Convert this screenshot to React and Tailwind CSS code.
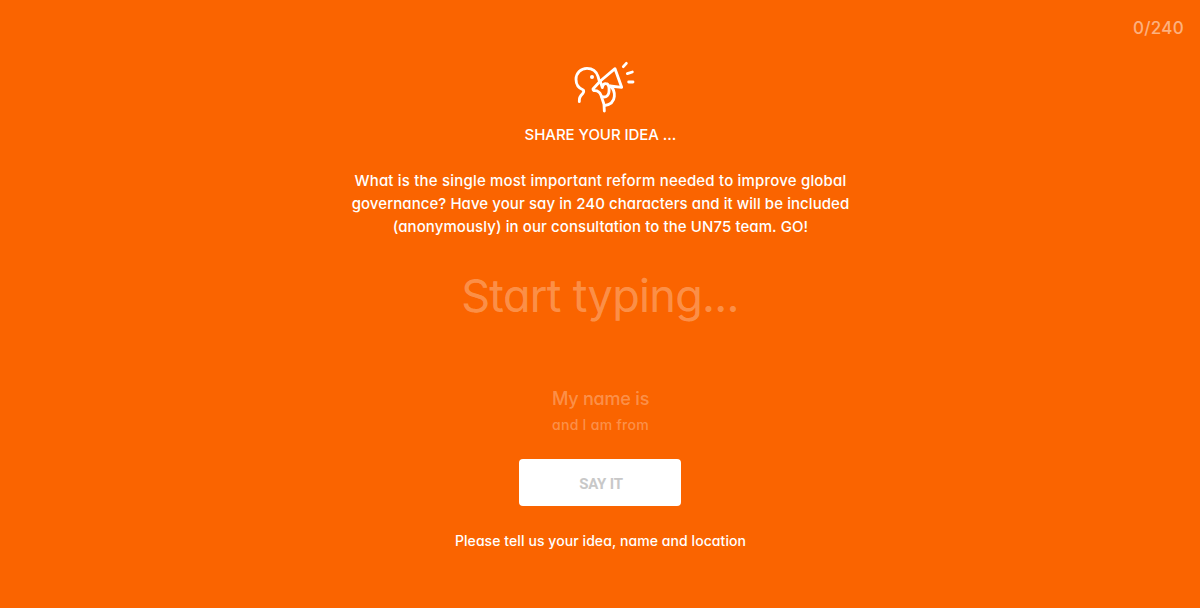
import React, { useState } from 'react';

const MAX_LENGTH = 240;

function MegaphoneIcon() {
  return (
    <svg
      viewBox="0 0 240 192"
      className="ml-[11px] h-16 w-20"
      fill="none"
      stroke="currentColor"
      strokeWidth="8.5"
      strokeLinecap="round"
      strokeLinejoin="round"
      aria-hidden
    >
      <path d="M40 140c-1-12 3-18 10-24 3-4 4-8 2-11-15-5-22-18-22-32 0-19 14-33 33-33 16 0 28 9 33 24l4 14" />
      <circle cx="78" cy="66" r="6" fill="currentColor" stroke="none" />
      <path d="M103 78l44-37 20 56-35-4" />
      <path d="M103 78l-22 24c0 4 2 5 6 5 8 0 14 4 18 14l9 27 1 20" />
      <path d="M103 80l6 18c1-8 5-13 11-12 6 0 8 5 9 12 1 12 0 20-5 24-4 4-10 5-17 3" />
      <path d="M134 94c8 7 12 18 11 30-1 15-13 25-30 28" />
      <path d="M172 35l9-10M184 56l15-5M188 81h13" />
    </svg>
  );
}

export default function App() {
  const [idea, setIdea] = useState('');
  const [name, setName] = useState('');
  const [location, setLocation] = useState('');

  return (
    <main className="relative flex h-[608px] flex-col items-center overflow-hidden bg-[#fa6400] pt-[55px] text-center font-['Inter','Open_Sans',sans-serif] text-white [font-feature-settings:'cv11']">
      <span className="absolute right-4 top-4 text-[17px] font-medium leading-6 tracking-[0.3px] text-white/50">
        {idea.length}/{MAX_LENGTH}
      </span>

      <MegaphoneIcon />

      <h1 className="ml-px mt-1 text-[15px] font-[550] leading-[23px] tracking-[-0.05px]">SHARE YOUR IDEA ...</h1>

      <p className="ml-px mt-[23px] whitespace-nowrap text-[15px] font-[550] leading-[23px]">
        <span className="block tracking-[0.19px]">
          What is the single most important reform needed to improve global
        </span>
        <span className="block tracking-[0.07px]">
          governance? Have your say in 240 characters and it will be included
        </span>
        <span className="block tracking-[0.09px]">(anonymously) in our consultation to the UN75 team. GO!</span>
      </p>

      <input
        value={idea}
        maxLength={MAX_LENGTH}
        onChange={(e) => setIdea(e.target.value)}
        placeholder="Start typing..."
        className="mt-[26px] h-16 w-[500px] bg-transparent text-center text-[45px] tracking-[-0.7px] outline-none placeholder:text-white/30"
      />

      <input
        value={name}
        onChange={(e) => setName(e.target.value)}
        placeholder="My name is"
        className="mt-14 h-7 w-[300px] bg-transparent pl-px text-center text-[18px] font-medium tracking-[-0.2px] outline-none placeholder:text-white/30"
      />
      <input
        value={location}
        onChange={(e) => setLocation(e.target.value)}
        placeholder="and I am from"
        className="h-6 w-[300px] bg-transparent pl-px text-center text-[14px] font-[550] tracking-[0.3px] outline-none placeholder:text-white/30"
      />

      <button
        type="button"
        className="mt-[22.5px] h-[47px] w-[162px] rounded-[4px] bg-white pl-0.5 pt-1 font-['Roboto',sans-serif] text-[15px] font-bold tracking-[-0.2px] text-[#c8c8c8]"
      >
        SAY IT
      </button>

      <p className="ml-px mt-[23.5px] text-[14px] font-[550] leading-[23px] tracking-[0.08px]">
        Please tell us your idea, name and location
      </p>
    </main>
  );
}
